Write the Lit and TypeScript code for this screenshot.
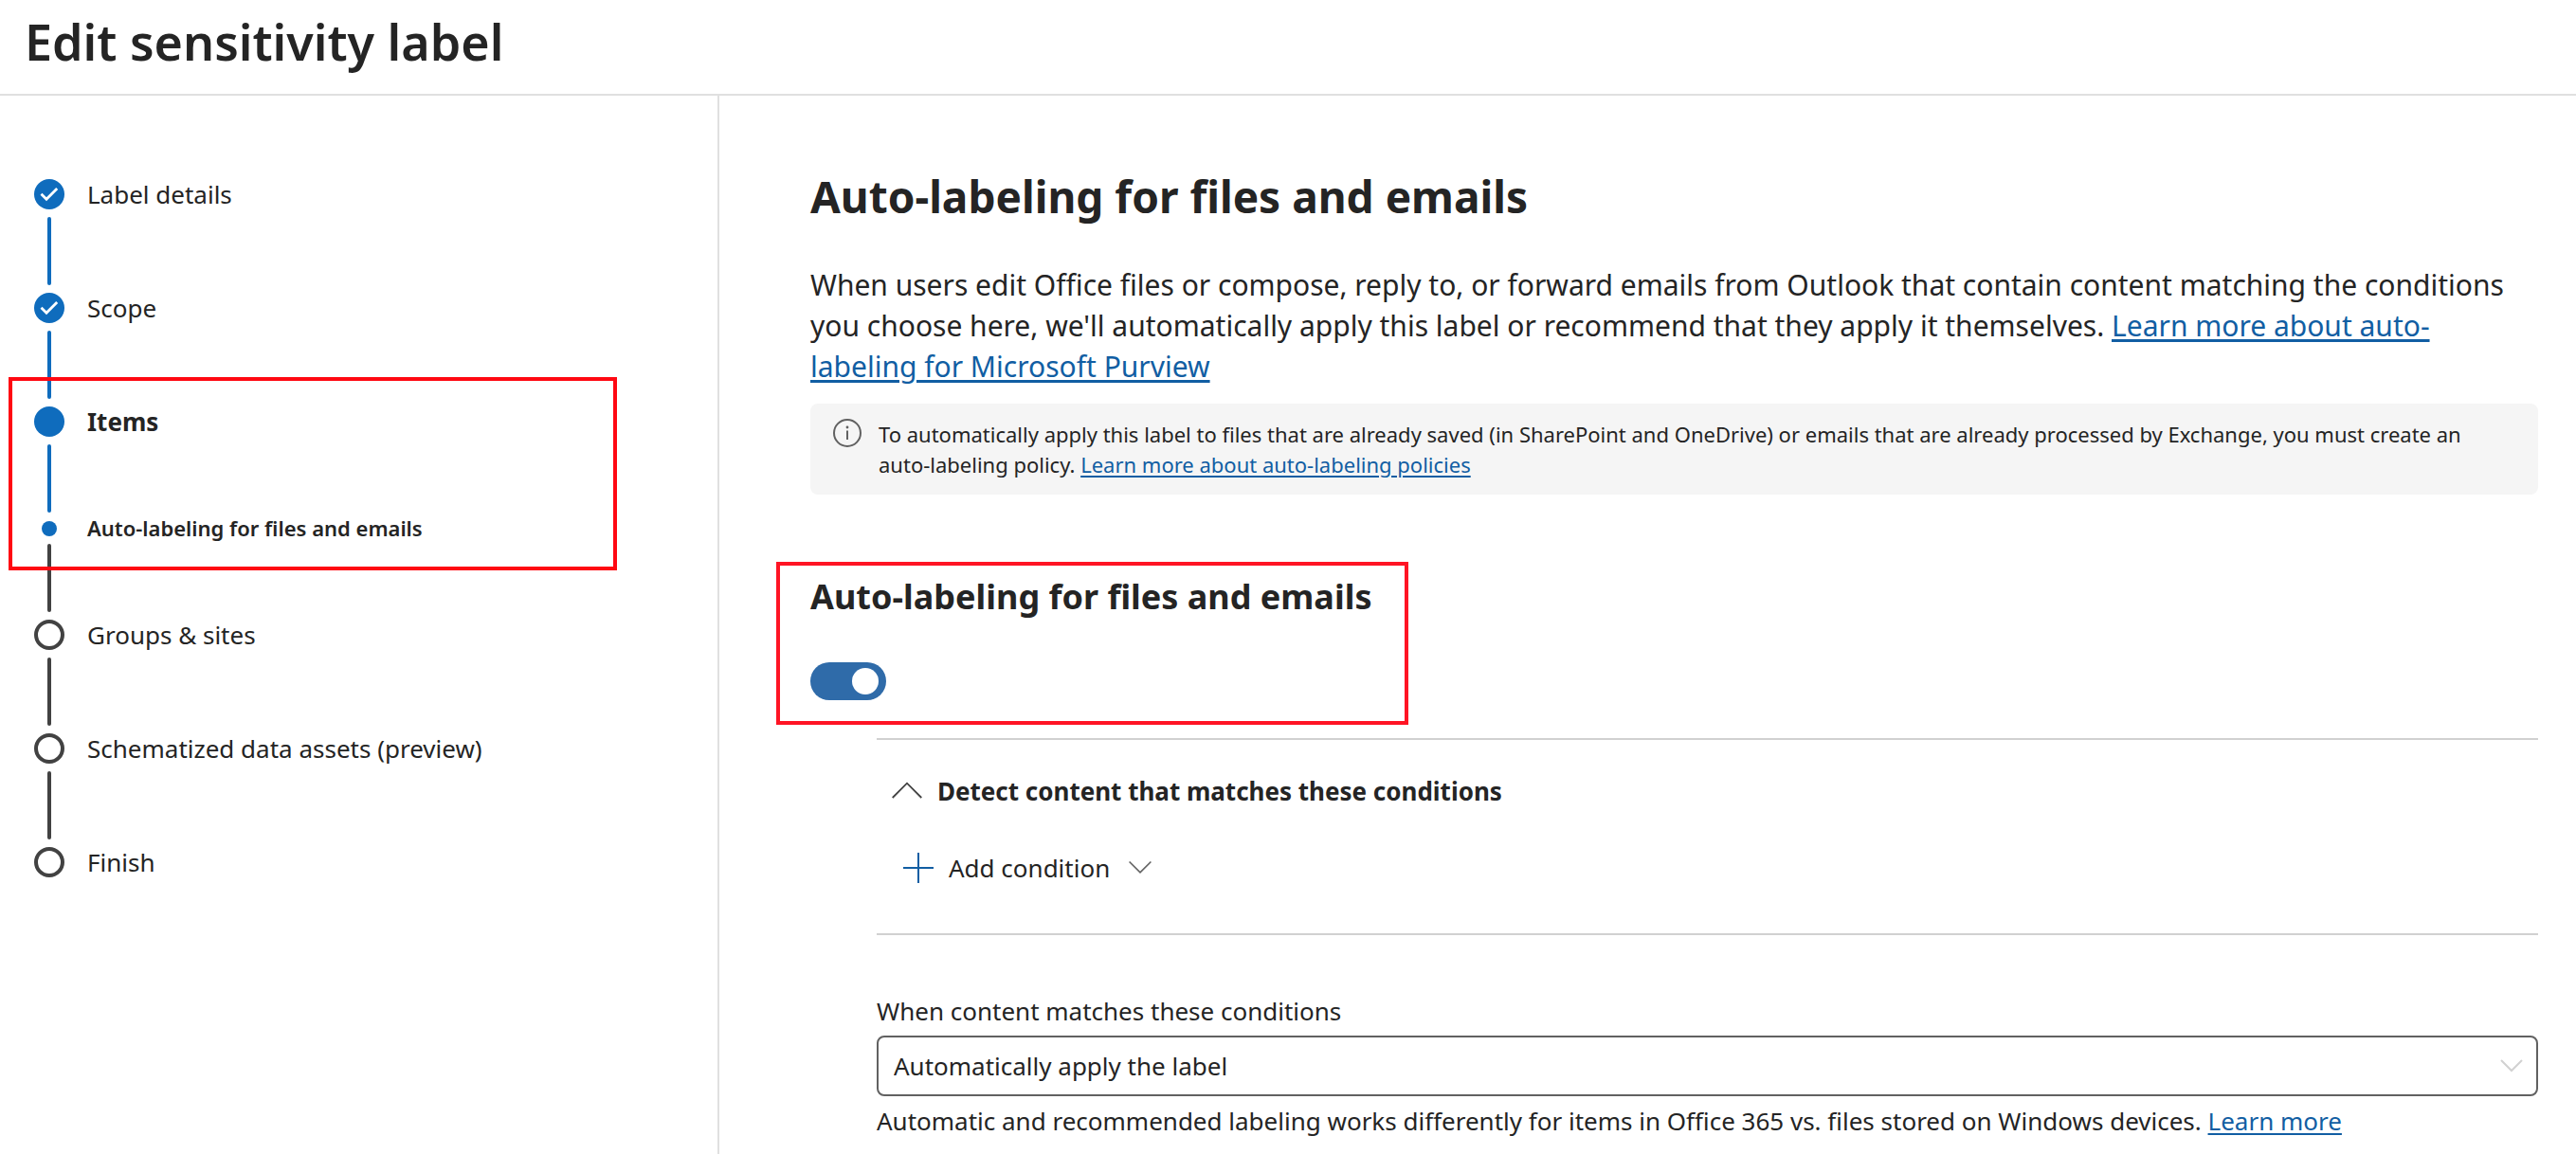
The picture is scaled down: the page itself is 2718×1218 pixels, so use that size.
import { LitElement, html, css, svg, nothing } from "lit";
import { customElement, property, state } from "lit/decorators.js";
import { classMap } from "lit/directives/class-map.js";

type StepState = "done" | "current" | "pending";

interface Step {
  label: string;
  state: StepState;
  children?: string[];
}

const STEPS: Step[] = [
  { label: "Label details", state: "done" },
  { label: "Scope", state: "done" },
  { label: "Items", state: "current", children: ["Auto-labeling for files and emails"] },
  { label: "Groups & sites", state: "pending" },
  { label: "Schematized data assets (preview)", state: "pending" },
  { label: "Finish", state: "pending" },
];

const checkMark = svg`<path d="M7.5 15.8 L13 21.2 L24.2 10" fill="none" stroke="#fff" stroke-width="2.8"/>`;

@customElement("wizard-steps")
export class WizardSteps extends LitElement {
  @property({ attribute: false }) steps: Step[] = [];

  static styles = css`
    :host {
      display: block;
    }
    ol {
      list-style: none;
      margin: 0;
      padding: 0;
    }
    .row {
      display: flex;
      align-items: center;
      gap: 24px;
      font-size: 26px;
      line-height: 32px;
    }
    .marker {
      flex: none;
      width: 32px;
      height: 32px;
    }
    .current {
      font-weight: 700;
    }
    .sub {
      font-size: 22px;
      line-height: 17px;
      font-weight: 600;
    }
    .sub .marker {
      height: 16px;
    }
    .line {
      width: 4px;
      height: 72px;
      margin: 8px 14px;
      border-radius: 2px;
      background: #424242;
    }
    .line.reached {
      background: #0f6cbd;
    }
    .marked {
      position: relative;
    }
    .marked::after {
      content: "";
      position: absolute;
      top: -31px;
      left: -27px;
      right: 106px;
      bottom: 44px;
      border: 4px solid #ff0812;
      pointer-events: none;
    }
  `;

  private marker(s: StepState) {
    return html`<svg class="marker" viewBox="0 0 32 32" aria-hidden="true">
      ${s === "pending"
        ? svg`<circle cx="16" cy="16" r="14" fill="#fff" stroke="#424242" stroke-width="4"/>`
        : svg`<circle cx="16" cy="16" r="16" fill="#0f6cbd"/>`}
      ${s === "done" ? checkMark : nothing}
    </svg>`;
  }

  private connector(reached: boolean) {
    return html`<div class=${classMap({ line: true, reached })}></div>`;
  }

  render() {
    return html`<ol>
      ${this.steps.map((step, i) => {
        const last = i === this.steps.length - 1;
        const current = step.state === "current";
        return html`<li class=${classMap({ marked: current })} aria-current=${current ? "step" : nothing}>
          <div class=${classMap({ row: true, current })}>
            ${this.marker(step.state)}<span>${step.label}</span>
          </div>
          ${last ? nothing : this.connector(step.state !== "pending")}
          ${step.children
            ? html`<ol>
                ${step.children.map(
                  (child) => html`<li>
                    <div class="row sub">
                      <svg class="marker" viewBox="0 0 32 16" aria-hidden="true">
                        <circle cx="16" cy="8" r="8" fill="#0f6cbd" />
                      </svg>
                      <span>${child}</span>
                    </div>
                    ${this.connector(false)}
                  </li>`
                )}
              </ol>`
            : nothing}
        </li>`;
      })}
    </ol>`;
  }
}

@customElement("app-root")
export class AppRoot extends LitElement {
  @state() private enabled = true;
  @state() private expanded = true;

  static styles = css`
    :host {
      display: flex;
      flex-direction: column;
      min-height: 100vh;
      background: #fff;
      color: #242424;
      font-family: "Noto Sans", "Open Sans", sans-serif;
      font-size: 26px;
      line-height: 36px;
    }
    * {
      box-sizing: border-box;
    }
    h1,
    h2,
    h3,
    p {
      margin: 0;
    }
    header {
      padding: 10px 26px 21px;
      border-bottom: 2px solid #e0e0e0;
    }
    header h1 {
      font-size: 52px;
      line-height: 68px;
      font-weight: 600;
    }
    a {
      color: #115ea3;
      text-decoration-thickness: 2px;
      text-underline-offset: 3px;
    }
    button {
      display: flex;
      align-items: center;
      border: 0;
      padding: 0;
      background: none;
      color: inherit;
      font: inherit;
      text-align: left;
      cursor: pointer;
    }
    svg {
      flex: none;
    }
    .body {
      flex: 1;
      display: grid;
      grid-template-columns: 759px minmax(0, 1fr);
    }
    nav {
      padding: 88px 0 0 36px;
      border-right: 2px solid #e0e0e0;
    }
    main {
      padding: 76px 40px 16px 96px;
    }
    .title {
      font-size: 46px;
      line-height: 60px;
      font-weight: 700;
    }
    .intro {
      margin-top: 42px;
      padding-right: 24px;
      font-size: 30px;
      line-height: 43px;
    }
    .intro a {
      text-decoration-thickness: 3px;
    }
    .note {
      display: flex;
      gap: 18px;
      margin-top: 18px;
      padding: 16px 24px;
      border-radius: 8px;
      background: #f5f5f5;
      font-size: 22px;
      line-height: 32px;
    }
    .feature {
      position: relative;
      width: fit-content;
      margin-top: 84px;
    }
    .feature::after {
      content: "";
      position: absolute;
      inset: -13px -38px -26px -36px;
      border: 4px solid #ff1424;
      pointer-events: none;
    }
    .feature h2 {
      font-size: 36px;
      line-height: 48px;
      font-weight: 700;
    }
    .switch {
      appearance: none;
      display: block;
      width: 80px;
      height: 40px;
      margin: 45px 0 0;
      padding: 6px 8px;
      border-radius: 20px;
      background: #8a8a8a;
      cursor: pointer;
    }
    .switch::before {
      content: "";
      display: block;
      width: 28px;
      height: 28px;
      border-radius: 50%;
      background: #fff;
    }
    .switch:checked {
      background: #2f6ba9;
    }
    .switch:checked::before {
      margin-left: auto;
    }
    .settings {
      margin: 40px 0 0 70px;
    }
    .conditions {
      padding: 36px 0 51px;
      border-top: 2px solid #d1d1d1;
      border-bottom: 2px solid #d1d1d1;
    }
    .conditions h3 {
      font-size: 26px;
      font-weight: 700;
    }
    .expander {
      gap: 16px;
      margin-left: 16px;
    }
    .add {
      gap: 16px;
      margin: 45px 0 0 28px;
    }
    .field {
      display: grid;
      gap: 8px;
      margin-top: 62px;
    }
    .picker {
      display: grid;
      align-items: center;
    }
    .picker > * {
      grid-area: 1 / 1;
    }
    .picker svg {
      justify-self: end;
      margin-right: 16px;
      pointer-events: none;
    }
    select {
      appearance: none;
      width: 100%;
      height: 64px;
      padding: 0 56px 0 16px;
      border: 2px solid #616161;
      border-radius: 8px;
      background: #fff;
      color: inherit;
      font: inherit;
    }
  `;

  private toggle(e: Event) {
    this.enabled = (e.target as HTMLInputElement).checked;
  }

  private conditions() {
    return html`<section class="conditions">
      <h3>
        <button class="expander" aria-expanded=${this.expanded} @click=${() => (this.expanded = !this.expanded)}>
          <svg width="32" height="32" viewBox="0 0 32 32" fill="none" stroke="#424242" stroke-width="1.8" aria-hidden="true">
            <path d=${this.expanded ? "M0.7 23 L16 7.7 L31.3 23" : "M0.7 8.5 L16 23.8 L31.3 8.5"} />
          </svg>
          Detect content that matches these conditions
        </button>
      </h3>
      ${this.expanded
        ? html`<button class="add">
            <svg width="32" height="32" viewBox="0 0 32 32" stroke="#115ea3" stroke-width="2" aria-hidden="true">
              <path d="M16 0 V32 M0 16 H32" />
            </svg>
            Add condition
            <svg width="28" height="24" viewBox="0 0 28 24" fill="none" stroke="#616161" stroke-width="1.6" aria-hidden="true">
              <path d="M4.6 5.5 L16 16.9 L27.4 5.5" />
            </svg>
          </button>`
        : nothing}
    </section>`;
  }

  render() {
    return html`
      <header><h1>Edit sensitivity label</h1></header>
      <div class="body">
        <nav aria-label="Steps"><wizard-steps .steps=${STEPS}></wizard-steps></nav>
        <main>
          <h2 class="title">Auto-labeling for files and emails</h2>
          <p class="intro">
            When users edit Office files or compose, reply to, or forward emails from Outlook that contain content
            matching the conditions you choose here, we'll automatically apply this label or recommend that they apply
            it themselves. <a href="#purview">Learn more about auto-labeling for Microsoft Purview</a>
          </p>
          <div class="note">
            <svg width="30" height="30" viewBox="0 0 30 30" aria-hidden="true">
              <circle cx="15" cy="15" r="14" fill="none" stroke="#616161" stroke-width="2" />
              <path d="M15 12.5 V22" stroke="#616161" stroke-width="2" />
              <circle cx="15" cy="9" r="1.4" fill="#616161" />
            </svg>
            <p>
              To automatically apply this label to files that are already saved (in SharePoint and OneDrive) or emails
              that are already processed by Exchange, you must create an auto-labeling policy.
              <a href="#policies">Learn more about auto-labeling policies</a>
            </p>
          </div>
          <section class="feature">
            <h2><label for="enable">Auto-labeling for files and emails</label></h2>
            <input class="switch" id="enable" type="checkbox" role="switch" .checked=${this.enabled} @change=${this.toggle} />
          </section>
          <div class="settings">
            ${this.conditions()}
            <div class="field">
              <label for="action">When content matches these conditions</label>
              <div class="picker">
                <select id="action">
                  <option>Automatically apply the label</option>
                </select>
                <svg width="24" height="24" viewBox="0 0 24 24" fill="none" stroke="#d1d1d1" stroke-width="2" aria-hidden="true">
                  <path d="M1 6 L12 17 L23 6" />
                </svg>
              </div>
              <p>
                Automatic and recommended labeling works differently for items in Office 365 vs. files stored on Windows
                devices. <a href="#labeling">Learn more</a>
              </p>
            </div>
          </div>
        </main>
      </div>
    `;
  }
}
